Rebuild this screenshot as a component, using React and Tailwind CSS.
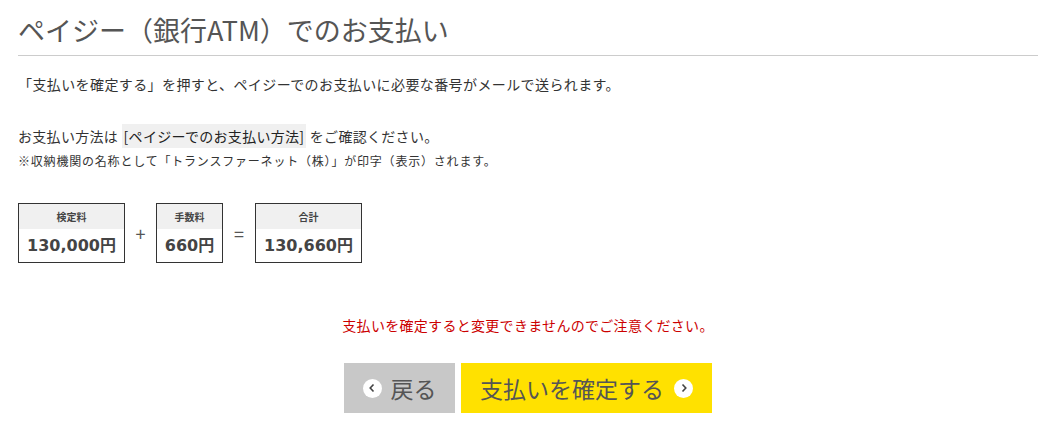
import React from 'react';

const jp = { fontFamily: '"Noto Sans CJK JP", "Noto Sans", sans-serif' };
const num = { fontFamily: '"DejaVu Sans", "Noto Sans CJK JP", sans-serif' };

const Chevron = ({ dir = 'right' }) => (
    <span className="inline-flex items-center justify-center w-[19px] h-[19px] rounded-full bg-white">
        <svg width="8" height="10" viewBox="0 0 8 10">
            <path
                d={dir === 'right' ? 'M2.5 1.5 L5.8 5 L2.5 8.5' : 'M5.5 1.5 L2.2 5 L5.5 8.5'}
                fill="none"
                stroke="#444"
                strokeWidth="1.6"
            />
        </svg>
    </span>
);

const FeeBox = ({ label, value, width }) => (
    <div className={`border border-[#333] ${width} flex flex-col`}>
        <div className="h-[25px] bg-[#f0f0f0] flex items-center justify-center text-[10px] font-bold text-[#444]" style={jp}>
            {label}
        </div>
        <div className="h-[33px] flex items-center justify-center text-[16px] font-bold text-[#444]" style={num}>
            {value}
        </div>
    </div>
);

export default function App() {
    return (
        <div className="w-[1056px] h-[436px] bg-white px-[18px] pt-[11px] text-[#333]" style={jp}>
            <h1 className="text-[27px] leading-[38px] text-[#555] font-normal pb-[6px] border-b border-[#ccc]">
                ペイジー（銀行ATM）でのお支払い
            </h1>

            <p className="mt-[17px] text-[14px] leading-[22px] tracking-[0.4px]">
                「支払いを確定する」を押すと、ペイジーでのお支払いに必要な番号がメールで送られます。
            </p>

            <p className="mt-[29px] text-[14px] leading-[24px] tracking-[0.3px]">
                お支払い方法は <span className="bg-[#f0f0f0] text-[#222] px-[2px] py-[2px]">[ペイジーでのお支払い方法]</span> をご確認ください。
            </p>
            <p className="mt-[4px] text-[12px] leading-[18px] tracking-[0.8px]">
                ※収納機関の名称として「トランスファーネット（株）」が印字（表示）されます。
            </p>

            <div className="mt-[33px] flex items-center">
                <FeeBox label="検定料" value="130,000円" width="w-[107px]" />
                <span className="w-[31px] text-center text-[18px] text-[#555]">+</span>
                <FeeBox label="手数料" value="660円" width="w-[67px]" />
                <span className="w-[32px] text-center text-[18px] text-[#555]">=</span>
                <FeeBox label="合計" value="130,660円" width="w-[107px]" />
            </div>

            <p className="mt-[52px] text-center text-[14px] leading-[20px] tracking-[0.3px] text-[#cc0000]">
                支払いを確定すると変更できませんのでご注意ください。
            </p>

            <div className="mt-[28px] flex justify-center gap-[6px]">
                <button className="w-[111px] h-[50px] bg-[#c8c8c8] flex items-center justify-center gap-[9px] text-[23px] text-[#555]" style={jp}>
                    <Chevron dir="left" />
                    <span>戻る</span>
                </button>
                <button className="w-[251px] h-[50px] bg-[#ffe100] flex items-center justify-center gap-[10px] text-[23px] text-[#555]" style={jp}>
                    <span>支払いを確定する</span>
                    <Chevron dir="right" />
                </button>
            </div>
        </div>
    );
}
